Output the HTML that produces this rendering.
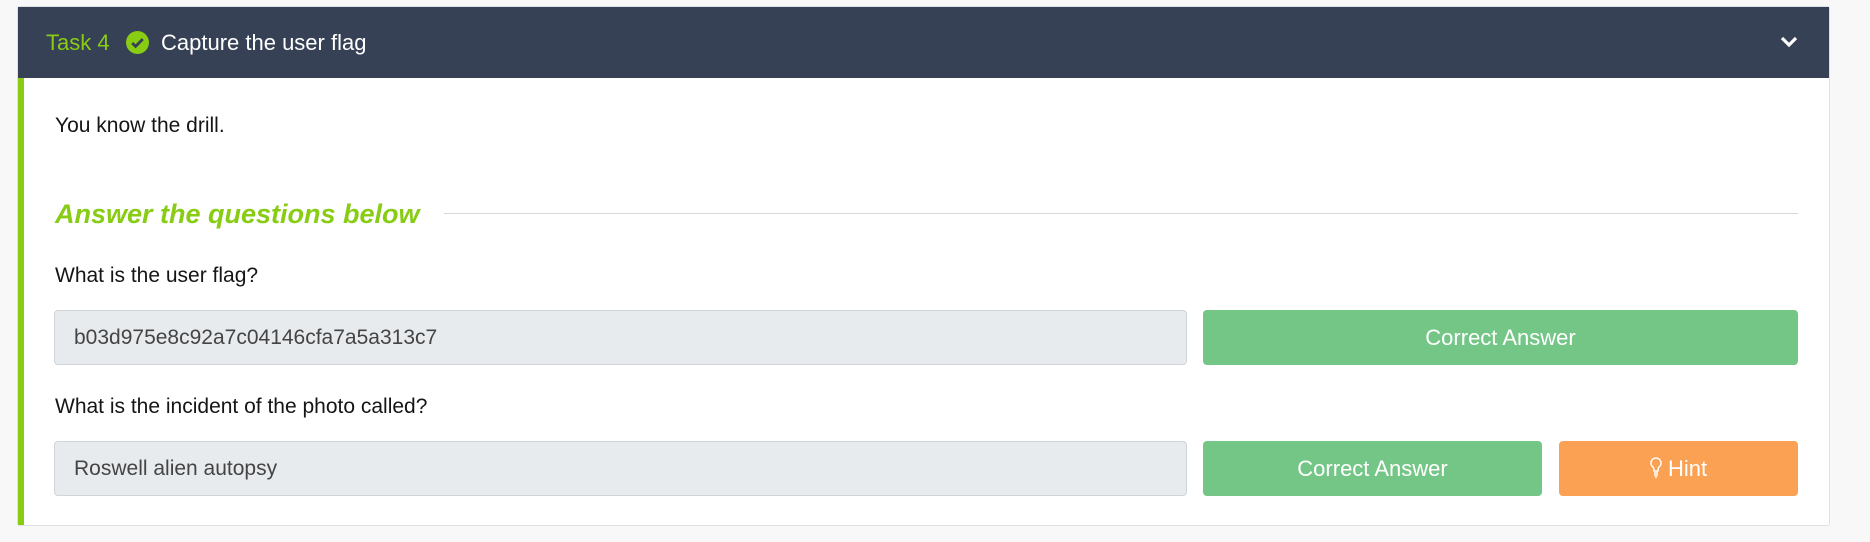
<!DOCTYPE html>
<html><head><style>
body{margin:0;width:1870px;height:542px;background:#f8f8f8;font-family:"Liberation Sans",sans-serif;position:relative;overflow:hidden}
.card{position:absolute;left:17px;top:6px;width:1813px;height:520px;background:#fff;border:1px solid #dde0e4;border-radius:3px;box-sizing:border-box}
.hd{position:absolute;left:0;top:0;right:0;height:71px;background:#364155}
.bar{position:absolute;left:0;top:71px;width:6px;bottom:0;background:#88cc14}
.t{position:absolute;top:0;height:71px;line-height:71px;font-size:22px}
.a{position:absolute;font-size:21px;color:#151515}
.in{position:absolute;left:36px;width:1133px;height:55px;background:#e8ebee;border:1px solid #ced4da;border-radius:4px;box-sizing:border-box;font-size:21px;color:#444;line-height:53px;padding-left:19px}
.b{position:absolute;height:55px;line-height:55px;text-align:center;color:#fff;font-size:22px;border-radius:4px;background:#74c687}
</style></head><body>
<div class="card">
<div class="hd">
<div class="t" style="left:28px;color:#88cc14">Task 4</div>
<svg style="position:absolute;left:108px;top:24px" width="23" height="23" viewBox="0 0 24 24"><circle cx="12" cy="12" r="12" fill="#88cc14"/><path d="M6.5 12.5l3.5 3.5 7.5-7.5" stroke="#364155" stroke-width="3" fill="none"/></svg>
<div class="t" style="left:143px;color:#fff">Capture the user flag</div>
<svg style="position:absolute;left:1762px;top:28px" width="18" height="14" viewBox="0 0 18 14"><path d="M2 3l7 7 7-7" stroke="#fff" stroke-width="3.2" fill="none"/></svg>
</div>
<div class="bar"></div>
<div class="a" style="left:37px;top:107px">You know the drill.</div>
<div style="position:absolute;left:37px;top:192px;font-size:27px;font-weight:bold;font-style:italic;color:#88cc14">Answer the questions below</div>
<div style="position:absolute;left:426px;top:206px;width:1354px;height:1px;background:#d5d8dc"></div>
<div class="a" style="left:37px;top:257px">What is the user flag?</div>
<div class="in" style="top:303px">b03d975e8c92a7c04146cfa7a5a313c7</div>
<div class="b" style="left:1185px;top:303px;width:595px">Correct Answer</div>
<div class="a" style="left:37px;top:388px">What is the incident of the photo called?</div>
<div class="in" style="top:434px">Roswell alien autopsy</div>
<div class="b" style="left:1185px;top:434px;width:339px">Correct Answer</div>
<div class="b" style="left:1541px;top:434px;width:239px;background:#faa154">
<svg width="12" height="22" viewBox="0 0 12 22" style="vertical-align:-3px"><path d="M6 1a5 5 0 0 0-3 9c1 1 1 3 1 4h4c0-1 0-3 1-4a5 5 0 0 0-3-9zM4 16h4M4 18h4M5 20h2" stroke="#fff" stroke-width="1.5" fill="none"/></svg> Hint</div>
</div>
</body></html>
